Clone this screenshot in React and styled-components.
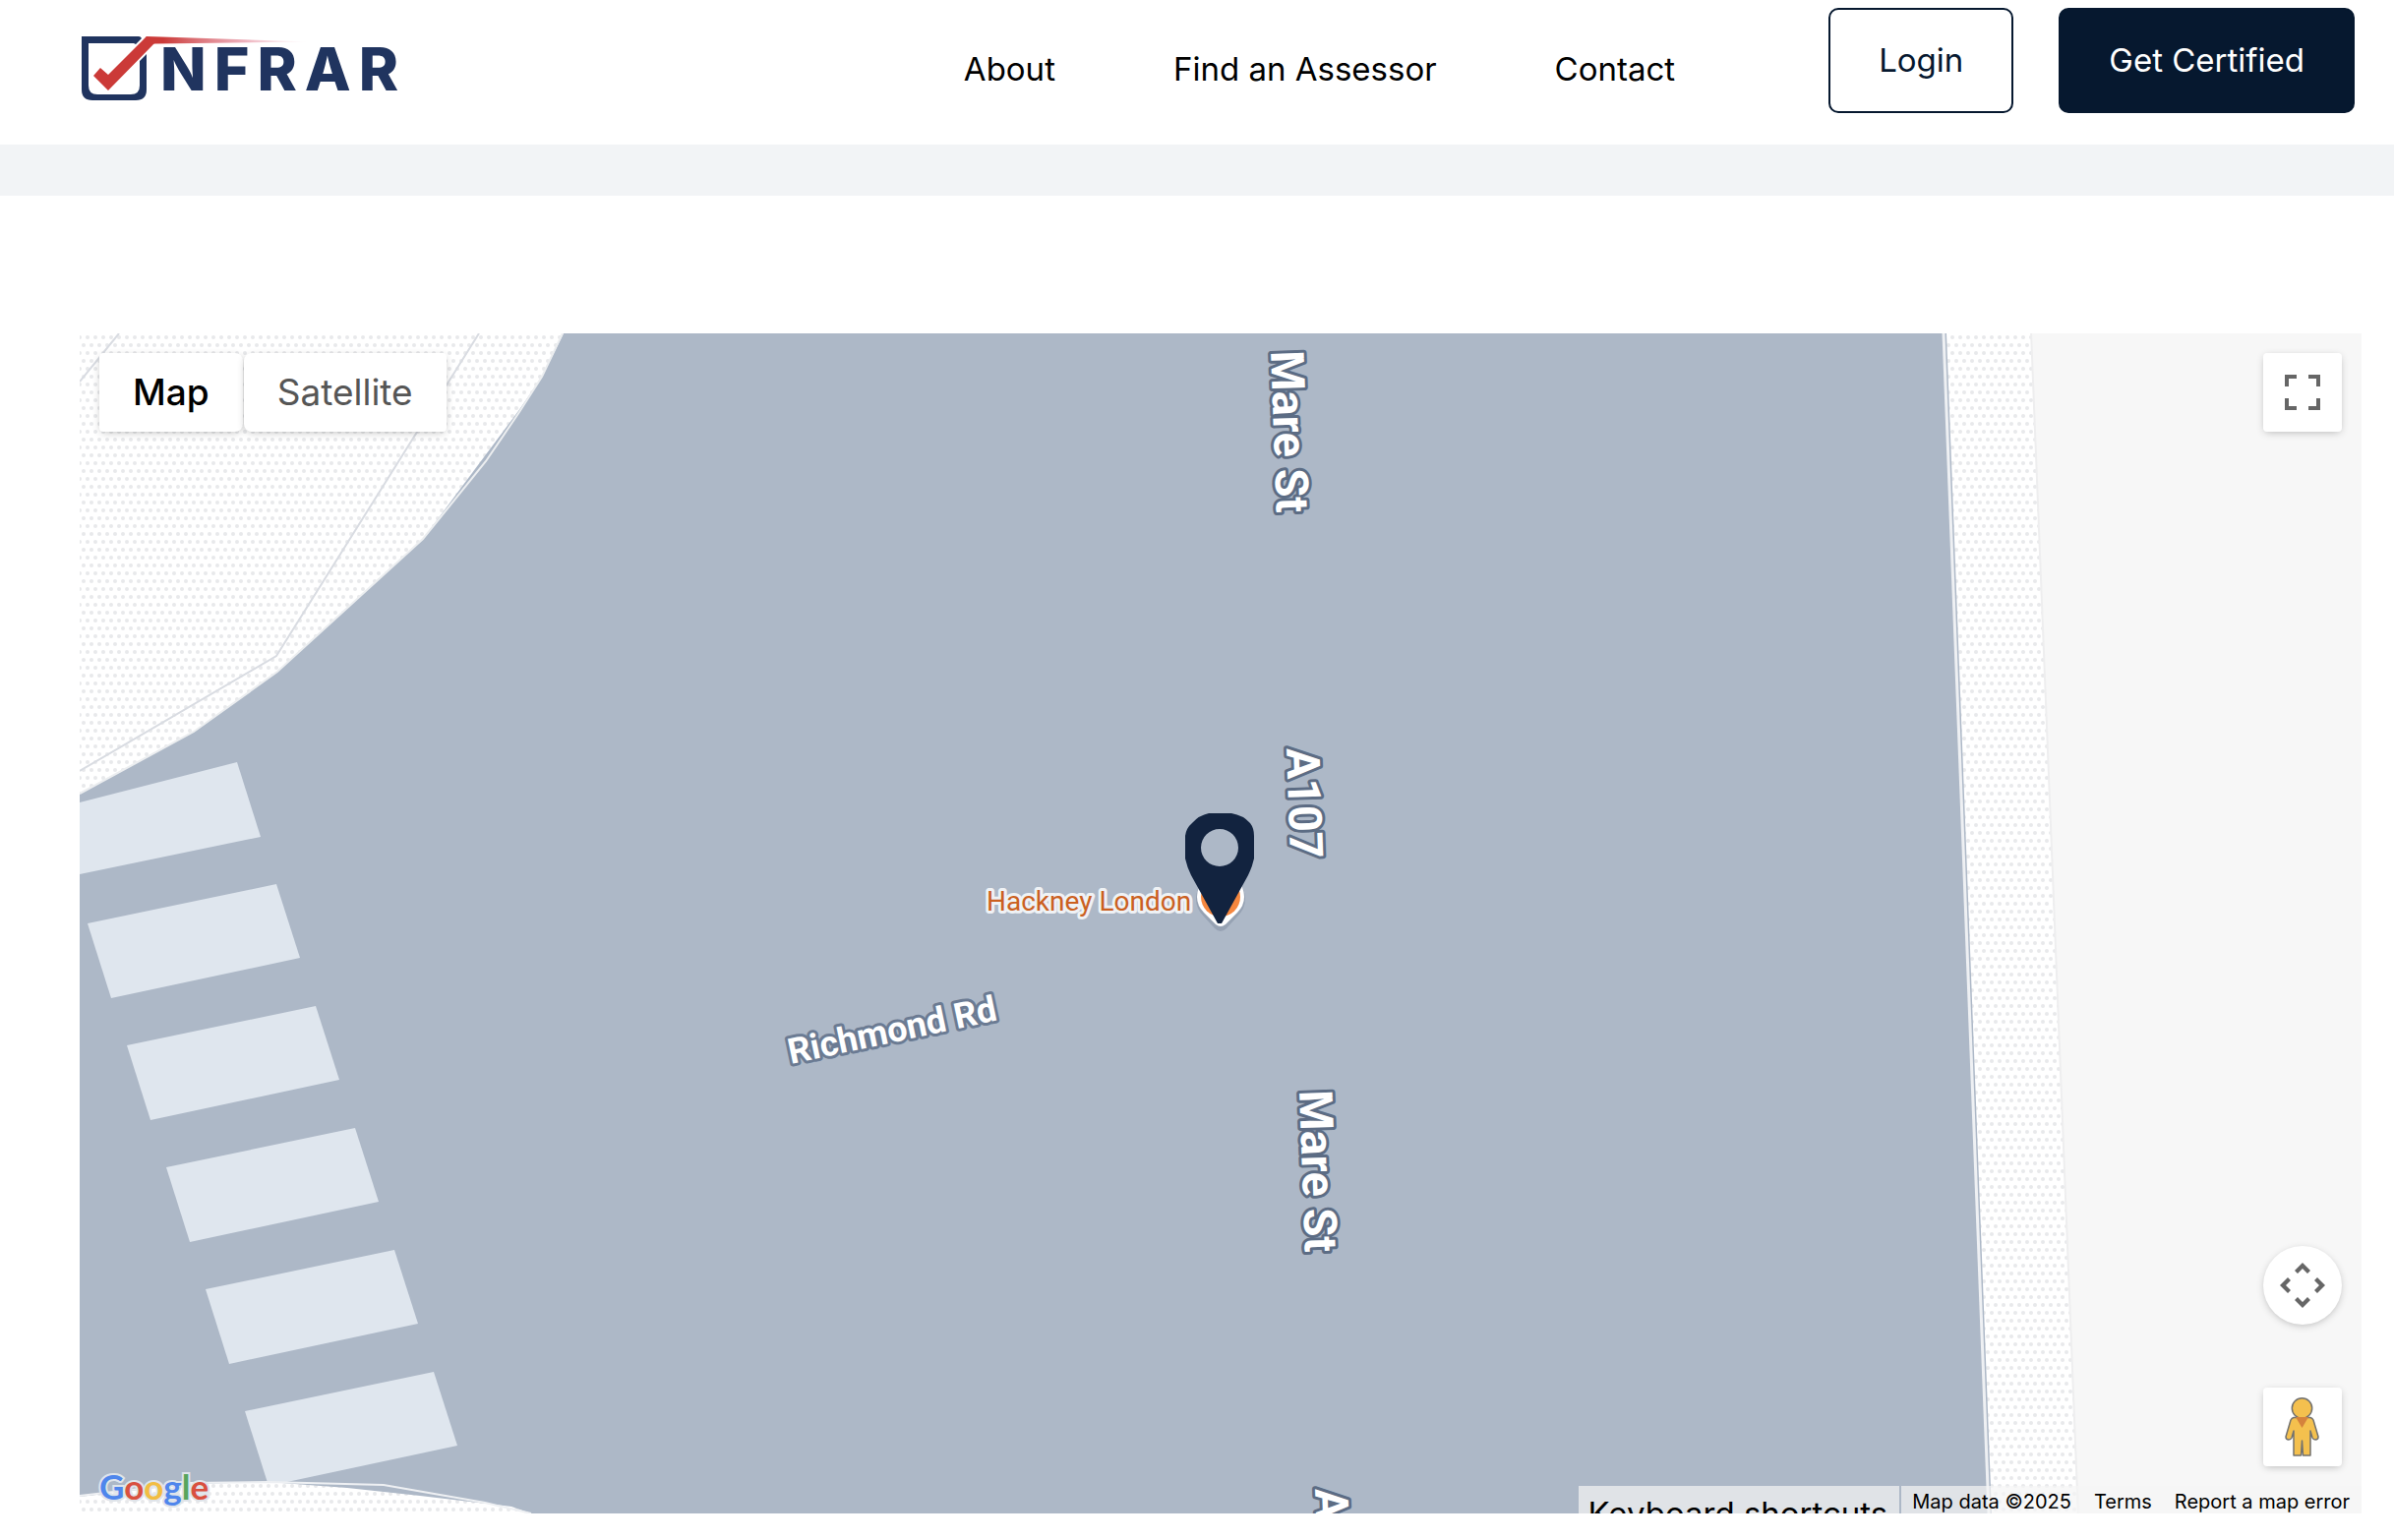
import React from "react";
import styled, { createGlobalStyle } from "styled-components";

const GlobalStyle = createGlobalStyle`
  *, *::before, *::after { box-sizing: border-box; }
  body {
    margin: 0;
    background: #fff;
    color: #000;
    font-family: Inter, "Open Sans", sans-serif;
  }
  a { color: inherit; text-decoration: none; }
  button { font: inherit; cursor: pointer; }
`;

const Header = styled.header`
  display: flex;
  align-items: center;
  min-height: 147px;
  padding: 8px 40px 16px 83px;
`;

const Logo = styled.a`
  display: flex;
  align-items: center;
  gap: 14px;
  color: #20345f;
`;

const LogoMark = styled.svg`
  width: 66px;
  height: 66px;
  overflow: visible;
`;

const Wordmark = styled.span`
  font-size: 61px;
  line-height: 66px;
  font-weight: 800;
  letter-spacing: 8px;
`;

const Nav = styled.nav`
  display: flex;
  gap: 120px;
  margin-left: auto;
  font-size: 33px;
  line-height: 40px;
`;

const Actions = styled.div`
  display: flex;
  align-self: flex-start;
  gap: 46px;
  margin-left: 156px;
`;

const ActionLink = styled.a`
  padding: 32px 49px;
  border: 2px solid #06182f;
  border-radius: 10px;
  font-size: 33px;
  line-height: 39px;
  background: ${(p) => (p.$solid ? "#06182f" : "#fff")};
  color: ${(p) => (p.$solid ? "#fff" : "#06182f")};
`;

const Band = styled.div`
  height: 52px;
  background: #f2f4f6;
`;

const Main = styled.main`
  padding: 140px 33px 27px 81px;
`;

const MapFrame = styled.section`
  position: relative;
  aspect-ratio: 29 / 15;
  overflow: hidden;
  background: #adb8c7;
`;

const Canvas = styled.svg`
  display: block;
  width: 100%;
  height: 100%;
`;

const TypeSwitch = styled.div`
  position: absolute;
  top: 20px;
  left: 20px;
  display: flex;
  gap: 1px;
`;

const TypeButton = styled.button`
  height: 80px;
  padding: 0 34px;
  border: 0;
  border-radius: ${(p) => (p.$active ? "4px 8px 8px 4px" : "8px 4px 4px 8px")};
  background: #fff;
  box-shadow: 0 2px 8px -2px rgba(0, 0, 0, 0.3);
  font-size: 37px;
  line-height: 44px;
  font-weight: ${(p) => (p.$active ? 500 : 400)};
  color: ${(p) => (p.$active ? "#000" : "#565656")};
`;

const ToolColumn = styled.div`
  position: absolute;
  top: 20px;
  right: 20px;
  bottom: 48px;
  display: flex;
  flex-direction: column;
`;

const ToolButton = styled.button`
  display: grid;
  place-items: center;
  width: 80px;
  height: 80px;
  padding: 0;
  border: 0;
  border-radius: ${(p) => (p.$round ? "50%" : "4px")};
  background: #fff;
  color: #666;
  box-shadow: 0 2px 8px -2px rgba(0, 0, 0, 0.3);
`;

const LowerTools = styled.div`
  display: flex;
  flex-direction: column;
  gap: 64px;
  margin-top: auto;
`;

const Brand = styled.a`
  position: absolute;
  left: 20px;
  bottom: 6px;
  font-family: Lato, sans-serif;
  font-size: 35px;
  line-height: 44px;
  font-weight: 700;
  -webkit-text-stroke: 4px #dfe4ea;
  paint-order: stroke fill;
`;

const Tint = styled.span`
  color: ${(p) => p.$color};
`;

const Attribution = styled.div`
  position: absolute;
  right: 0;
  bottom: 0;
  display: flex;
  gap: 2px;
  height: 28px;
  overflow: hidden;
`;

const Shortcuts = styled.button`
  padding: 8px 12px 0 10px;
  border: 0;
  background: rgba(245, 245, 245, 0.7);
  font-size: 33px;
  line-height: 40px;
  color: #000;
`;

const Credits = styled.div`
  display: flex;
  background: rgba(245, 245, 245, 0.7);
  font-size: 20px;
  line-height: 32px;
`;

const Credit = styled.span`
  padding: 0 12px 0 11px;
`;

const crossing = [0, 1, 2, 3, 4];

const streetLabels = [
  { text: "Mare St", x: 1211, y: 18 },
  { text: "A107", x: 1227, y: 422 },
  { text: "Mare St", x: 1240, y: 770 },
  { text: "A107", x: 1256, y: 1175 },
];

function LogoDrawing() {
  return (
    <LogoMark viewBox="0 0 66 66" aria-hidden="true">
      <defs>
        <linearGradient id="tail" x1="66" x2="232" y1="0" y2="0" gradientUnits="userSpaceOnUse">
          <stop offset="0" stopColor="#cb3a38" />
          <stop offset="0.1" stopColor="#cb3a38" />
          <stop offset="0.6" stopColor="#e58f9f" stopOpacity="0.7" />
          <stop offset="1" stopColor="#f3c6d4" stopOpacity="0" />
        </linearGradient>
      </defs>
      <path
        fill="#20345f"
        d="M0 0H58Q60 0 61 2L55 8L53 7H7V50Q7 59 16 59H50Q59 59 59 50V25L66 18V54Q66 65 55 65H11Q0 65 0 54Z"
      />
      <path fill="url(#tail)" d="M66 0L232 5.5L74 7.5L60 8Z" />
      <path fill="#cb3a38" d="M12 40L19 32L27 39L66 0L75 6L27 55Z" />
    </LogoMark>
  );
}

function Terrain() {
  return (
    <Canvas viewBox="0 0 2320 1200" preserveAspectRatio="xMidYMid slice" role="img" aria-label="Map of Mare St and Richmond Rd, Hackney">
      <defs>
        <pattern id="dots" width="8" height="16" patternUnits="userSpaceOnUse">
          <rect width="8" height="16" fill="#fff" />
          <g fill="#e8e9eb">
            <circle cx="0" cy="4" r="2" />
            <circle cx="8" cy="4" r="2" />
            <circle cx="4" cy="12" r="2" />
          </g>
        </pattern>
      </defs>
      <rect width="2320" height="1200" fill="#adb8c7" />

      <path fill="url(#dots)" d="M0 0H492L470 44L446 79L349 209L201 344L116 405L0 468Z" />
      <path fill="none" stroke="#eceef0" strokeWidth="2" d="M491 0L470 44L447 80L413 130L349 209L201 344L116 405L0 468" />
      <path fill="none" stroke="#d9dce2" strokeWidth="2" d="M40 0L0 49M406 0L200 328L0 445" />

      <path fill="#dfe6ee" d="M0 477L160 436L184 512L0 550Z" />
      {crossing.map((n) => (
        <path key={n} fill="#dfe6ee" d="M8 600L200 560L224 635L32 676Z" transform={`translate(${n * 40} ${n * 124})`} />
      ))}

      <path fill="url(#dots)" d="M0 1183L112 1170L192 1168L272 1174L346 1182L439 1193L459 1200H0Z" />
      <path fill="none" stroke="#eef0f3" strokeWidth="2" d="M0 1182L112 1169L192 1168L309 1171L412 1189L459 1200" />

      <path fill="url(#dots)" d="M1898 0H1984L2032 1200H1944Z" />
      <path fill="none" stroke="#eef0f3" strokeWidth="3" d="M1895 0L1941 1200" />
      <path fill="#f7f7f7" stroke="#eeeeef" strokeWidth="2" d="M1984 -2H2324V1204H2032Z" />

      <g
        fontFamily="Roboto, sans-serif"
        strokeLinejoin="round"
        paintOrder="stroke"
      >
        <g fontSize="47" fontWeight="700" fill="#fff" stroke="#5c6c84" strokeWidth="6">
          {streetLabels.map((l) => (
            <text key={l.y} transform={`translate(${l.x} ${l.y}) rotate(88)`}>{l.text}</text>
          ))}
        </g>
        <text fontSize="36" fontWeight="700" fill="#fff" stroke="#6b7b93" strokeWidth="6" transform="translate(723 743) rotate(-12)">
          Richmond Rd
        </text>
        <text x="922" y="587" fontSize="28" fill="#cb6021" stroke="#eff2f5" strokeWidth="6">
          Hackney London
        </text>
      </g>

      <path fill="#7f8ca0" opacity="0.5" d="M1135 575A25 25 0 1 1 1185 575Q1185 585 1177 593L1166 605Q1160 611 1154 605L1143 593Q1135 585 1135 575Z" />
      <path fill="#fff" d="M1136 573A24 24 0 1 1 1184 573Q1184 582 1177 589L1165 601Q1160 605 1155 601L1143 589Q1136 582 1136 573Z" />
      <circle cx="1160" cy="573" r="20" fill="#f5873f" />
      <path
        fill="#12233f"
        fillRule="evenodd"
        d="M1148 488H1171Q1183 490 1190 498Q1194 503 1194 511V534Q1192 543 1188 551L1161 600H1157L1130 551Q1126 543 1124 534V511Q1125 503 1131 498Q1138 490 1148 488ZM1159 504A19 19 0 1 0 1159 542A19 19 0 1 0 1159 504Z"
      />
    </Canvas>
  );
}

function FullscreenIcon() {
  return (
    <svg width="36" height="36" viewBox="0 0 36 36" fill="currentColor" aria-hidden="true">
      <path d="M0 0H12V4H4V12H0ZM24 0H36V12H32V4H24ZM0 24H4V32H12V36H0ZM32 24H36V36H24V32H32Z" />
    </svg>
  );
}

function PanIcon() {
  return (
    <svg width="46" height="46" viewBox="0 0 46 46" fill="currentColor" aria-hidden="true">
      {[0, 90, 180, 270].map((a) => (
        <path key={a} d="M23 0L31 8L28 11L23 6L18 11L15 8Z" transform={`rotate(${a} 23 23)`} />
      ))}
    </svg>
  );
}

function PegmanIcon() {
  return (
    <svg width="36" height="60" viewBox="0 0 36 60" aria-hidden="true">
      <g fill="#f4c04e" stroke="#73726f" strokeWidth="1.5" strokeLinejoin="round">
        <path d="M9 20.500H26Q28 21 29 23L34 40Q34 43 31 43Q29 43 28 41L26 34V59H18.500L17.500 44L16.500 59H9V34L7 41Q6 43 4 43Q1 43 1 40L6 23Q7 21 9 20.500Z" />
        <circle cx="17.500" cy="11" r="10.200" />
      </g>
      <path fill="#d5823c" d="M11 20H24L17.500 31Z" />
    </svg>
  );
}

export default function App() {
  return (
    <>
      <GlobalStyle />
      <Header>
        <Logo href="#" aria-label="NFRAR">
          <LogoDrawing />
          <Wordmark>NFRAR</Wordmark>
        </Logo>
        <Nav>
          <a href="#about">About</a>
          <a href="#assessors">Find an Assessor</a>
          <a href="#contact">Contact</a>
        </Nav>
        <Actions>
          <ActionLink href="#login">Login</ActionLink>
          <ActionLink href="#certify" $solid>Get Certified</ActionLink>
        </Actions>
      </Header>
      <Band />
      <Main>
        <MapFrame>
          <Terrain />
          <TypeSwitch>
            <TypeButton type="button" $active>Map</TypeButton>
            <TypeButton type="button">Satellite</TypeButton>
          </TypeSwitch>
          <ToolColumn>
            <ToolButton type="button" aria-label="Toggle fullscreen view"><FullscreenIcon /></ToolButton>
            <LowerTools>
              <ToolButton type="button" $round aria-label="Map camera controls"><PanIcon /></ToolButton>
              <ToolButton type="button" aria-label="Open Street View"><PegmanIcon /></ToolButton>
            </LowerTools>
          </ToolColumn>
          <Brand href="#google" aria-label="Google">
            <Tint $color="#4f86ec">G</Tint>
            <Tint $color="#d9503f">o</Tint>
            <Tint $color="#f2bd42">o</Tint>
            <Tint $color="#4f86ec">g</Tint>
            <Tint $color="#58a55c">l</Tint>
            <Tint $color="#d9503f">e</Tint>
          </Brand>
          <Attribution>
            <Shortcuts type="button">Keyboard shortcuts</Shortcuts>
            <Credits>
              <Credit>Map data ©2025</Credit>
              <Credit as="a" href="#terms">Terms</Credit>
              <Credit as="a" href="#report">Report a map error</Credit>
            </Credits>
          </Attribution>
        </MapFrame>
      </Main>
    </>
  );
}
